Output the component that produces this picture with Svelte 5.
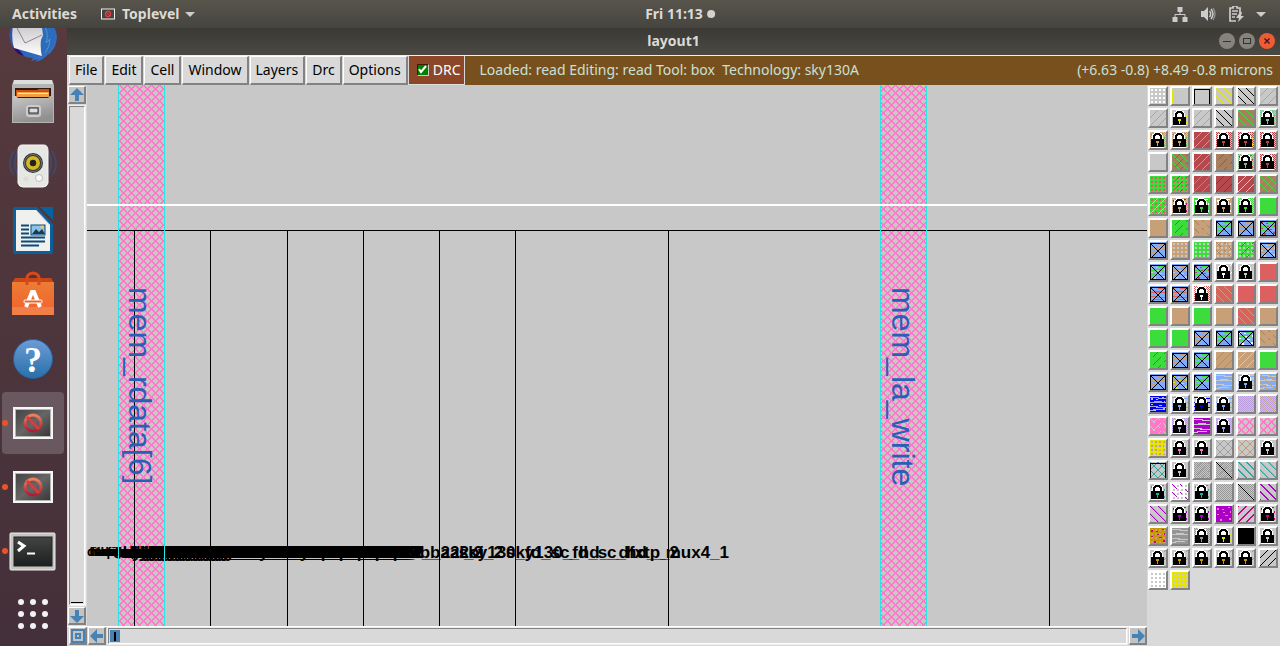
<script>
  const G = '#c8c8c8', tan = '#c8a078', green = '#3cdc3c', coral = '#dc6060', red = '#b4484c';
  const brown = '#a88060', blue = '#80acf8', gold = '#c89600', yellow = '#e6e600', pink = '#ff78c8';
  const violet = '#aa00c8', mag = '#c8008c', teal = '#28a8a0', gray = '#969696', navy = '#0000f0', lilac = '#b89cdc';

  const s = (bg, ...ops) => ({ bg, ops });
  const lock = (c, style = 'checker', bg = G, c2) => s(bg, [style, c], ...(c2 ? [['specks', c2]] : []), ['lock', bg === G ? c : bg]);
  const xbox = (c, c2) => s(blue, ['wave', c], ...(c2 ? [['specks', c2]] : []), ['xbox', '#000']);

  const rows = [
    [s(G, ['dots', '#fff']), s(G, ['frame', yellow]), s(G, ['frame', '#000']), s(G, ['down', yellow]), s(G, ['down', '#000']), s(G, ['up', tan])],
    [s(G, ['up', tan]), lock(yellow, 'specks'), s(G, ['up', tan]), s(G, ['down', '#000']), s(brown, ['down', green]), lock('#78c890', 'checker', G, tan)],
    [lock(tan, 'checker', G, green), lock(tan, 'checker', G, green), s(red, ['up', tan]), lock(red), lock(red, 'checker', G, yellow), lock(red)],
    [s(G), s(brown, ['down', green], ['updash', red]), s(red, ['up', tan]), s(brown, ['updash', red]), lock('#80b880', 'checker', G, red), lock(red)],
    [s(green, ['dots', coral]), s(green, ['dots', coral], ['updash', red]), s(red, ['up', gold]), s(red, ['up', mag]), s(red, ['up', yellow]), s(brown, ['up', gold], ['down', green])],
    [s(green, ['dots', coral], ['up', yellow]), lock(tan, 'checker', G, mag), lock('#fff', 'specks', green), lock('#fff', 'specks', tan), lock(green), s(green)],
    [s(tan), s(green, ['updash', red]), s(tan, ['downdash', brown]), xbox(green), xbox(tan), xbox(green, red)],
    [xbox(tan), s(tan, ['dots', G]), s(green, ['dots', G]), s(tan, ['dots', G], ['downdash', brown]), s(green, ['dots', G], ['updash', red]), xbox(tan, G)],
    [xbox(green, G), xbox(tan, G), xbox(green, red), lock('#fff', 'updash'), lock(G), s(coral)],
    [xbox(coral), xbox(coral, tan), lock(coral, 'checker', '#fff'), s(coral, ['down', tan]), s(coral), s(coral)],
    [s(green), s(tan), s(green), s(tan), s(coral, ['down', tan]), s(tan)],
    [s(green), s(green), xbox(tan), xbox(green), xbox(green, '#fff'), s(tan, ['downdash', brown])],
    [s(green, ['updash', red]), xbox(tan), xbox(green), s(tan, ['up', gold]), s(tan, ['up', yellow]), s(green)],
    [xbox(tan), xbox(tan, yellow), xbox(green), s(blue, ['wave', G]), lock(blue, 'wave'), s(blue, ['wave', G], ['down', tan])],
    [s(navy, ['specks', G], ['wave', '#a0a8e8']), lock(blue, 'wave'), lock(navy, 'wave'), lock(blue, 'wave'), s(G, ['checker', lilac]), s(G, ['checker', lilac], ['down', tan])],
    [s(pink, ['downdash', G], ['updash', G]), lock(lilac), s(violet, ['wave', G]), lock(lilac), s(G, ['hatch', pink]), s(G, ['hatch', pink], ['up', tan])],
    [s(yellow, ['dots', tan], ['specks', G]), lock(pink, 'updash'), lock(pink, 'updash'), s(G, ['cross', '#a0a0a0']), s(G, ['cross', '#a0a0a0'], ['down', tan]), lock(G)],
    [s(G, ['cross', teal], ['frame', '#000']), lock(G), s(G, ['checker', gray], ['updash', pink]), s(G, ['checker', gray], ['updash', pink], ['line', '#000']), s(G, ['down', teal], ['down2', teal]), s(G, ['down2', tan], ['down', teal])],
    [lock(teal, 'specks'), s('#fff', ['dots', G], ['downdash', violet]), lock(teal, 'specks'), s(G, ['checker', gray]), s(G, ['checker', gray], ['line', '#000']), s(G, ['down', violet], ['down2', violet])],
    [s(G, ['down2', tan], ['down', violet]), lock(violet, 'specks'), lock(violet, 'specks'), s(violet, ['specks', pink]), s(G, ['up', mag], ['up2', mag]), lock(mag, 'specks')],
    [s(gold, ['dots', tan], ['specks', mag]), s(gray, ['wave', G]), lock(gray), lock(yellow, 'specks'), s('#000'), lock(G)],
    [lock(gold, 'updash'), lock(gold, 'updash'), lock(gold, 'updash'), lock(gold, 'updash'), lock(gold, 'updash'), s(G, ['up', '#000'])],
    [s('#fff', ['dots', G]), s(yellow, ['dots', G])]
  ];

  const px = (x, y, w = 1, h = 1) => `M${x} ${y}h${w}v${h}h${-w}z`;
  let checker = '', dots = '';
  for (let y = 0; y < 16; y++) for (let x = y % 2; x < 16; x += 2) checker += px(x, y);
  for (let y = 1; y < 16; y += 4) for (let x = 1; x < 16; x += 4) dots += px(x, y, 2, 2);
  // One-pixel stairs: dir is the slope, shift moves them sideways.
  const stairs = (dir, shift = 0, keep = () => true) => {
    let d = '';
    for (let y = 0; y < 16; y++) for (let x = 0; x < 16; x++) {
      const k = dir > 0 ? x + y + 1 : x - y;
      if (((k + shift) % 8 + 8) % 8 === 0 && keep(x, y)) d += px(x, y);
    }
    return d;
  };
  const broken = (x, y) => (y + (x >> 3) * 3) % 8 < 5;
  const down = stairs(-1), up = stairs(1);
  let line = '', xlines = '';
  for (let i = 0; i < 16; i++) line += px(i, i);
  for (let i = 1; i < 15; i++) xlines += px(i, i + 1) + px(15 - i, i + 1);

  const fills = {
    checker, dots, down, up, line,
    wave: px(0, 1, 9) + px(8, 2, 8) + px(0, 6, 4) + px(4, 5, 8, 2) + px(12, 6, 4) + px(0, 10, 8) + px(6, 11, 10) + px(0, 14, 4) + px(3, 13, 10),
    specks: px(1, 2, 2, 2) + px(12, 1, 2) + px(14, 5, 1, 2) + px(6, 3, 2) + px(1, 8, 2) + px(9, 9, 3) + px(4, 13, 2, 2) + px(13, 12, 2, 2) + px(7, 6, 2),
    frame: px(0, 1, 16) + px(0, 1, 1, 15) + px(15, 1, 1, 15),
    downdash: stairs(-1, 0, broken),
    updash: stairs(1, 0, broken),
    down2: stairs(-1, -1),
    up2: stairs(1, -1),
    cross: down + up,
    hatch: down + up + stairs(-1, 1) + stairs(1, 1)
  };

  const menus = ['File', 'Edit', 'Cell', 'Window', 'Layers', 'Drc', 'Options'];
  let drc = $state(true);

  const wells = [31, 793];
  const gridLines = [47, 123, 200, 276, 352, 428, 581, 962];
  const prefix = 'sky130_fd_sc_hd__';
  const cells = [['mux4_1', 642], ['dfxtp_2', 592], ['a22oi_2', 416], ['o2bb2ai_2', 396]];
  const kinds = ['a22o_2', 'dfxtp_2', 'o22a_2', 'a21oi_2', 'mux2_1', 'nor2_2', 'a221o_2', 'and2_2', 'or2_2'];
  for (let i = 0; i < 44; i++) cells.push([kinds[i % kinds.length], 337 - i * 2]);
  const shortNames = [['fill', 2], ['tap', 8], ['decap', 0], ['fill', 20], ['decap', 14], ['buf', 30], ['inv', 26], ['mux', 3], ['nand', 17]];
</script>

{#snippet swatch(item)}
  <svg width="16" height="16" viewBox="0 0 16 16" shape-rendering="crispEdges" aria-hidden="true">
    <rect width="16" height="16" fill={item.bg} />
    {#each item.ops as [kind, color]}
      {#if kind === 'lock'}
        <path d="M4 0h6v1h2v2h1v4h1v9H1V6h1V2h2z" fill="#fff" />
        <path d="M5 1h5v1h1v1h1v4h2v8H1V7h2V3h1V2h1zM6 3v1H5v3h5V4H9V3z" fill="#000" fill-rule="evenodd" />
        <path d="M6 3h3v1h1v3H5V4h1z" fill="#fff" />
        <path d="M6 9h3v2H8v3H7v-3H6z" fill={color} />
      {:else if kind === 'xbox'}
        <path d="M0 1h16v15H0zM1 2v13h14V2z" fill={color} fill-rule="evenodd" />
        <path d={xlines} fill={color} />
      {:else}
        <path d={fills[kind]} fill={color} />
      {/if}
    {/each}
  </svg>
{/snippet}

{#snippet arrow(turn)}
  <svg width="14" height="14" viewBox="0 0 14 14" aria-hidden="true">
    <path d="M7 0L14 7H9V13H5V7H0z" fill="#4682b4" transform="rotate({turn} 7 7)" />
  </svg>
{/snippet}

{#snippet toplevel()}
  <svg width="48" height="48" viewBox="0 0 48 48" aria-hidden="true">
    <rect x="4" y="8" width="40" height="32" fill="#f6f6f4" />
    <rect x="6" y="10" width="36" height="28" fill="#b4b4b0" />
    <rect x="7" y="11" width="34" height="26" fill="url(#screen)" />
    <circle cx="24" cy="24" r="8" fill="none" stroke="url(#forbid)" stroke-width="3" />
    <path d="M18 18l12 12" stroke="#d83c3c" stroke-width="3" />
  </svg>
{/snippet}

<div class="desktop">
  <header class="topbar">
    <button class="plain">Activities</button>
    <button class="plain app">
      <svg width="14" height="12" viewBox="0 0 14 12" aria-hidden="true">
        <rect x=".5" y="1" width="13" height="10" fill="#444" stroke="#eee" />
        <circle cx="7" cy="6" r="2.5" fill="none" stroke="#e04040" stroke-width="1.3" /><path d="M5 4l4 4" stroke="#e04040" />
      </svg>
      Toplevel
      <svg width="10" height="5" viewBox="0 0 10 5" aria-hidden="true"><path d="M0 0h10L5 5z" fill="#ccc" /></svg>
    </button>
    <button class="plain clock">Fri 11:13 <span class="bullet"></span></button>
    <button class="plain tray" aria-label="System">
      <svg width="16" height="16" viewBox="0 0 16 16" aria-hidden="true"><path d="M5.500 1h5v5h-5zM.5 11h5v5h-5zM10.500 11h5v5h-5z" fill="#ccc" /><path d="M8 6v3M3 11V8.500h10V11" stroke="#ccc" fill="none" /></svg>
      <svg width="16" height="16" viewBox="0 0 16 16" aria-hidden="true"><path d="M1 5h3l4-4v14l-4-4H1z" fill="#ccc" /><path d="M9.500 5q2.500 3 0 6M11 3q4 5 0 10" stroke="#ccc" stroke-width="1.500" fill="none" /><path d="M13 2q4 6 0 12" stroke="#888" stroke-width="1.500" fill="none" /></svg>
      <svg width="16" height="16" viewBox="0 0 16 16" aria-hidden="true"><path d="M5 2V0h4v2h3v5M8 15H2V2h4" stroke="#ccc" stroke-width="1.700" fill="none" /><path d="M4 5h6M4 8h5M4 11h3" stroke="#ccc" stroke-width="1.500" /><path d="M12 6l-4 6h3l-1 4 6-6h-3l1-4z" fill="#ccc" /></svg>
      <svg width="10" height="5" viewBox="0 0 10 5" aria-hidden="true"><path d="M0 0h10L5 5z" fill="#ccc" /></svg>
    </button>
  </header>

  <div class="body">
    <nav class="dock" aria-label="Dock">
      <button class="slot" aria-label="Thunderbird">
        <svg width="48" height="48" viewBox="0 0 48 48" aria-hidden="true">
          <defs><linearGradient id="bird" x2="1" y2="1"><stop stop-color="#2c4aa0" /><stop offset="1" stop-color="#3278d0" /></linearGradient>
            <linearGradient id="env" x2="0" y2="1"><stop stop-color="#c8c4c8" /><stop offset="1" stop-color="#fff" /></linearGradient></defs>
          <path d="M0 20Q3 0 24 0 46 2 48 22q-1 12-9 18l1-2q-5 7-14 9l3-3-7 2 2-3Q8 42 2 28z" fill="url(#bird)" />
          <path d="M4 32q3 7 11 9l-8-10z" fill="#28106c" />
          <path d="M4 10L32 8q4 16 1 33L5 33Q2 24 4 10z" fill="url(#env)" />
          <path d="M8 13l8 15L33 20" fill="none" stroke="#888" />
          <path d="M33 7q4 10-1 18-1 8 1 17 12-8 13-21Q45 6 33 7z" fill="#2d6cb8" />
          <path d="M36 12q4 8 1 16l4-4q0 8-5 14" fill="none" stroke="#4c94dc" />
        </svg>
      </button>
      <button class="slot" aria-label="Files">
        <svg width="48" height="48" viewBox="0 0 48 48" aria-hidden="true">
          <defs><linearGradient id="cab" x2=".4" y2="1"><stop stop-color="#c8c8c8" /><stop offset="1" stop-color="#909090" /></linearGradient></defs>
          <path d="M5 1h38l2 5v38H3V6z" fill="#b4b4b4" /><path d="M5 1h38l1 4H4z" fill="#ddd" />
          <rect x="6" y="9" width="36" height="13" fill="#2c1c14" /><path d="M7 11h21l2-1h10v8H7z" fill="#d04c10" />
          <path d="M8 13h32v5H8z" fill="#f0a040" /><path d="M9 14.500h30" stroke="#ffe8b0" />
          <path d="M4 17h3l2 2h30l2-2h3v26H4z" fill="url(#cab)" />
          <rect x="18" y="27" width="13" height="10" rx="2" fill="#999" stroke="#ccc" stroke-width="2" /><rect x="20" y="29" width="9" height="5" fill="#ddd" stroke="#333" />
        </svg>
      </button>
      <button class="slot" aria-label="Rhythmbox">
        <svg width="48" height="48" viewBox="0 0 48 48" aria-hidden="true">
          <path d="M5 8q-8 14 0 24M9 8q-7 12 0 24M43 8q8 14 0 24M39 8q7 12 0 24" stroke="#434868" stroke-width="2" fill="none" />
          <path d="M13 2h22q4 0 4 6v32q-1 4-5 4H14q-4 0-5-4V8q0-6 4-6z" fill="#e6e6e2" stroke="#f8f8f8" />
          <circle cx="24" cy="20" r="10" fill="#303438" /><circle cx="24" cy="20" r="8.500" fill="none" stroke="#777" /><circle cx="24" cy="20" r="7" fill="#d4b820" /><circle cx="24" cy="20" r="3.200" fill="#222" />
          <circle cx="30" cy="35" r="3.500" fill="#fafafa" stroke="#bbb" /><circle cx="17" cy="36" r="2.500" fill="#dcdcd8" />
        </svg>
      </button>
      <button class="slot" aria-label="Writer">
        <svg width="48" height="48" viewBox="0 0 48 48" aria-hidden="true">
          <rect x="4" width="40" height="47" rx="2" fill="#0c609a" /><path d="M28 0h5l11 12v5z" fill="#4e363c" />
          <path d="M7 3h20l14 15v26H7z" fill="#f0f0ee" /><path d="M31 0h13v13z" fill="#0862a0" /><path d="M27 3l14 15" stroke="#c8c8c8" />
          <path d="M12 18.500h8M12 22.500h8M12 26.500h8M12 30.500h24M12 34.500h24M12 38.500h18" stroke="#0c4a78" stroke-width="2" />
          <rect x="22" y="18" width="14" height="10" fill="#88c4ea" stroke="#0c4a78" /><path d="M23 27l4-5 3 3 3-3 3 5z" fill="#203848" /><circle cx="33" cy="20" r="1.500" fill="#fc3" />
        </svg>
      </button>
      <button class="slot" aria-label="Ubuntu Software">
        <svg width="48" height="48" viewBox="0 0 48 48" aria-hidden="true">
          <defs><linearGradient id="bag" x2="0" y2="1"><stop stop-color="#ec7c34" /><stop offset=".75" stop-color="#f06830" /><stop offset=".76" stop-color="#f08048" /></linearGradient></defs>
          <path d="M6 7h36l3 5H3z" fill="#c8461a" /><path d="M3 11h42v33H3z" fill="url(#bag)" />
          <path d="M18 14V7q0-4 6-5 6 1 6 5v7" fill="none" stroke="#d84818" stroke-width="3" />
          <path d="M17 36l6-15h2l6 15" fill="none" stroke="#fff" stroke-width="4" /><rect x="15" y="29" width="18" height="3" rx="1" fill="#e86828" stroke="#fff" />
        </svg>
      </button>
      <button class="slot" aria-label="Help">
        <svg width="48" height="48" viewBox="0 0 48 48" aria-hidden="true">
          <defs><linearGradient id="help" x2="0" y2="1"><stop stop-color="#6c9cd8" /><stop offset="1" stop-color="#2870a8" /></linearGradient></defs>
          <circle cx="24" cy="24" r="19.500" fill="url(#help)" stroke="#2c5c98" />
          <text x="24" y="37" class="question">?</text>
        </svg>
      </button>
      <button class="slot active" aria-label="Toplevel">{@render toplevel()}<span class="running"></span></button>
      <button class="slot" aria-label="Toplevel console">{@render toplevel()}<span class="running"></span></button>
      <button class="slot" aria-label="Terminal">
        <svg width="48" height="48" viewBox="0 0 48 48" aria-hidden="true">
          <defs>
            <linearGradient id="screen" x2="1" y2="1"><stop stop-color="#444" /><stop offset=".5" stop-color="#666" /><stop offset="1" stop-color="#383838" /></linearGradient>
            <linearGradient id="forbid" x2="0" y2="1"><stop stop-color="#f08060" /><stop offset="1" stop-color="#b01c34" /></linearGradient>
            <linearGradient id="term" x2="0" y2="1"><stop stop-color="#444" /><stop offset="1" stop-color="#1c2020" /></linearGradient>
          </defs>
          <rect x="1" y="6" width="45" height="37" rx="1" fill="#c4c4c0" stroke="#eee" /><rect x="5" y="10" width="38" height="29" fill="url(#term)" stroke="#222" />
          <path d="M9 15l6 4-6 5" fill="none" stroke="#fff" stroke-width="3" /><path d="M18 26.500h8" stroke="#fff" stroke-width="2" />
        </svg><span class="running"></span>
      </button>
      <button class="slot" aria-label="Show Applications">
        <svg width="48" height="48" viewBox="0 0 48 48" aria-hidden="true" fill="#f2f2f2">
          {#each [11, 23, 35] as y}{#each [12, 24, 36] as x}<circle cx={x} cy={y} r="3" />{/each}{/each}
        </svg>
      </button>
    </nav>

    <section class="window">
      <div class="titlebar">
        <h1>layout1</h1>
        <div class="controls">
          <button aria-label="Minimize"><svg width="16" height="16" viewBox="0 0 16 16"><path d="M4 8.500h8" stroke="#333" /></svg></button>
          <button aria-label="Maximize"><svg width="16" height="16" viewBox="0 0 16 16"><rect x="4.500" y="5.500" width="7" height="5" fill="none" stroke="#333" /></svg></button>
          <button class="close" aria-label="Close"><svg width="16" height="16" viewBox="0 0 16 16"><path d="M5.500 5.500l5 5M10.500 5.500l-5 5" stroke="#412" stroke-width="1.300" /></svg></button>
        </div>
      </div>

      <div class="menubar">
        {#each menus as m}<button class="menu">{m}</button>{/each}
        <label class="drc"><input type="checkbox" bind:checked={drc} /><span class="tick"><svg width="9" height="9" viewBox="0 0 9 9" aria-hidden="true"><path d="M1 4l2 3 5-6" stroke="#fff" stroke-width="2" fill="none" /></svg></span>DRC</label>
        <div class="status"><span>Loaded: read Editing: read Tool: box&nbsp; Technology: sky130A</span><span>(+6.63 -0.8) +8.49 -0.8 microns</span></div>
      </div>

      <div class="work">
        <div class="vscroll">
          <button class="step" aria-label="Scroll up">{@render arrow(0)}</button>
          <div class="trough"><span class="vthumb"></span></div>
          <button class="step" aria-label="Scroll down">{@render arrow(180)}</button>
        </div>

        <svg class="canvas" width="100%" height="100%" role="img" aria-label="read">
          <defs>
            <pattern id="mesh" width="8" height="8" patternUnits="userSpaceOnUse" shape-rendering="crispEdges">
              {#each [0, 1, 2, 3, 4, 5, 6, 7] as i}
                <rect x={i} y={i} width="1" height="1" fill="#ff78c8" />
                <rect x={7 - i} y={i} width="1" height="1" fill="#ff78c8" />
                <rect x={(i + 1) % 8} y={i} width="1" height="1" fill="#ff78c8" />
                <rect x={(8 - i) % 8} y={i} width="1" height="1" fill="#ff78c8" />
              {/each}
            </pattern>
          </defs>
          {#each wells as x}
            <rect {x} width="47" height="100%" fill="url(#mesh)" />
          {/each}
          {#each gridLines as x}
            <rect {x} y="145" width="1" height="100%" fill="#000" />
          {/each}
          <rect y="145" width="100%" height="1" fill="#000" />
          <g class="cellname">
            {#each cells as [name, end]}<text x={end} y="473" text-anchor="end">{prefix}{name}</text>{/each}
            {#each shortNames as [name, x]}<text class="short" {x} y="471">{name}</text>{/each}
          </g>
          {#each wells as x}
            <rect {x} width="1" height="100%" fill="#28e6e6" /><rect x={x + 46} width="1" height="100%" fill="#28e6e6" />
          {/each}
          <rect y="119" width="100%" height="2" fill="#fff" />
          <text class="net" transform="translate(42 202) rotate(90)">mem_rdata[6]</text>
          <text class="net" transform="translate(805 202) rotate(90)">mem_la_write</text>
        </svg>

        <div class="hscroll">
          <button class="step" aria-label="Zoom to fit"><svg width="14" height="14" viewBox="0 0 14 14" aria-hidden="true" fill="none" stroke="#4682b4"><rect x="1" y="1" width="12" height="12" stroke-width="2" /><rect x="5" y="5" width="4" height="4" stroke-width="2" /></svg></button>
          <button class="step" aria-label="Scroll left">{@render arrow(-90)}</button>
          <div class="trough"><span class="hthumb"></span></div>
          <button class="step" aria-label="Scroll right">{@render arrow(90)}</button>
        </div>

        <div class="palette">
          {#each rows as row, r}{#each row as item, c}
            <button class="chip" aria-label="Layer {r * 6 + c + 1}">{@render swatch(item)}</button>
          {/each}{/each}
        </div>
      </div>
    </section>
  </div>
</div>

<style>
  :global(body) { margin: 0; }
  * { box-sizing: border-box; }
  button { margin: 0; padding: 0; border: 0; background: none; font: inherit; color: inherit; }
  svg { display: block; flex: none; }
  .desktop { display: flex; flex-direction: column; height: 100vh; overflow: hidden; font-family: "Noto Sans", sans-serif; font-size: 14px; background: #4a343a; }
  .topbar { position: relative; display: grid; grid-template-columns: auto auto 1fr auto; align-items: center; flex: none; height: 28px; padding: 0 14px 0 12px; background: linear-gradient(#58554d, #45443e); color: #dcdad4; font-weight: 700; }
  .plain { display: flex; align-items: center; line-height: 20px; }
  .app { gap: 7px; margin-left: 24px; }
  .app svg:last-child { margin-left: -2px; }
  .clock { position: absolute; left: 50%; transform: translateX(-50%); margin-left: 40px; gap: 4px; }
  .bullet { width: 8px; height: 8px; border-radius: 50%; background: #d4d2cc; }
  .tray { grid-column: 4; gap: 12px; }
  .body { display: flex; flex: 1; min-height: 0; }
  .dock { display: flex; flex-direction: column; justify-content: flex-end; align-items: center; gap: 2px; flex: none; width: 67px; padding-right: 1px; overflow: hidden; background: linear-gradient(#563a3e, #44303a); }
  .slot { position: relative; display: flex; align-items: center; justify-content: center; flex: none; width: 62px; height: 62px; border-radius: 4px; }
  .active { background: #695860; }
  .running { position: absolute; left: 0; top: 28px; width: 6px; height: 6px; border-radius: 50%; background: #e95420; }
  .question { font: 700 36px "Liberation Serif", serif; fill: #fff; text-anchor: middle; }
  .window { display: flex; flex-direction: column; flex: 1; min-width: 0; background: #d9d9d9; }
  .titlebar { position: relative; display: flex; align-items: center; justify-content: center; flex: none; height: 27px; padding-bottom: 1px; background: linear-gradient(#3a3934, #4a4943); color: #dcdad4; }
  h1 { margin: 0; font: inherit; font-weight: 700; line-height: 20px; }
  .controls { position: absolute; right: 5px; display: flex; gap: 4px; }
  .controls button { width: 16px; height: 16px; border-radius: 50%; background: #85837c; }
  .controls .close { background: #ee5c34; }
  .menubar { display: flex; align-items: stretch; flex: none; height: 30px; padding-left: 2px; border-top: 1px solid #eee; color: #000; }
  .menu { padding: 0 5px 1px; margin-right: 1px; background: #d9d9d9; border: 2px solid; border-color: #fff #828282 #828282 #fff; border-width: 1px 2px 2px 1px; }
  .drc { position: relative; display: flex; align-items: center; gap: 4px; padding: 0 3px 1px 8px; margin-right: 1px; background: #8c4628; color: #fff; border-bottom: 1px solid #ddd; }
  .drc input { position: absolute; opacity: 0; margin: 0; }
  .tick { display: flex; align-items: center; justify-content: center; width: 12px; height: 12px; background: #008000; border: 1px solid #d0c8c0; border-color: #401c08 #d0c8c0 #d0c8c0 #401c08; }
  input:not(:checked) + .tick svg { visibility: hidden; }
  .status { display: flex; flex: 1; align-items: center; justify-content: space-between; padding: 0 7px 2px 15px; background: #78501e; color: #c8e0d8; white-space: nowrap; }
  .work { display: grid; grid-template: minmax(0, 1fr) 20px / 20px minmax(0, 1fr) 133px; flex: 1; min-height: 0; }
  .vscroll { display: flex; flex-direction: column; gap: 1px; padding: 1px; }
  .hscroll { grid-column: 1 / 3; display: flex; gap: 1px; padding: 0 0 1px 2px; border-top: 1px solid #fff; }
  .step { display: flex; align-items: center; justify-content: center; flex: none; width: 18px; height: 18px; background: #c3c3c3; border: 2px solid; border-color: #fff #828282 #828282 #fff; border-width: 1px 2px 2px 1px; }
  .trough { display: flex; flex: 1; padding: 1px; margin: 1px; background: #d9d9d9; border: 1px solid; border-color: #828282 #fff #fff #828282; outline: 1px solid #eee; }
  .vthumb { align-self: flex-end; flex: 1; height: 1px; background: #000; }
  .hthumb { width: 10px; background: linear-gradient(#000, #000) center / 2px 9px no-repeat #4682b4; }
  .canvas { grid-column: 2; grid-row: 1; background: #c8c8c8; overflow: hidden; }
  .cellname { font: 700 17px "Liberation Sans", sans-serif; }
  .cellname .short { font-size: 13px; }
  .net { font: 32px "Liberation Sans", sans-serif; fill: #2860b8; }
  .palette { grid-column: 3; grid-row: 1 / 3; display: grid; grid-template-columns: repeat(6, 20px); grid-auto-rows: 20px; align-content: start; gap: 2px; padding: 1px; background: #d9d9d9; }
  .chip { width: 20px; height: 20px; border: 2px solid; border-color: #fff #828282 #828282 #fff; }
</style>
